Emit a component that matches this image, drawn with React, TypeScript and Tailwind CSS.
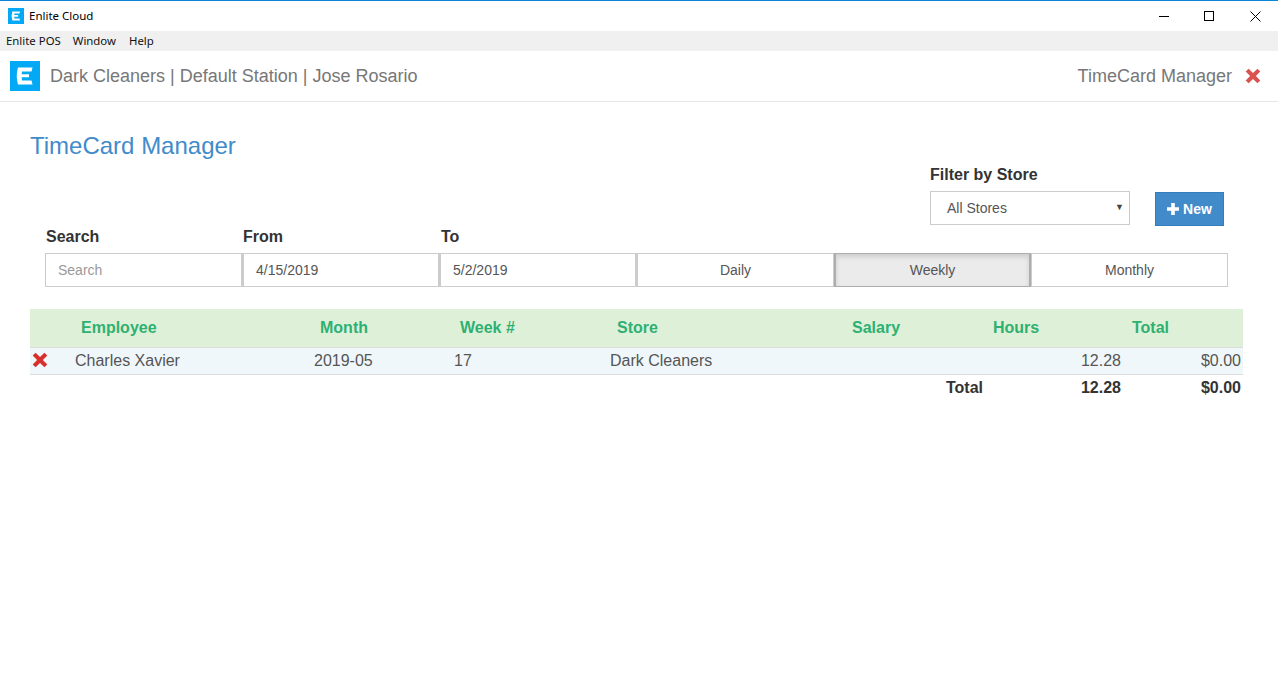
import React from "react";

const Logo = ({ size }: { size: number }) => (
  <svg width={size} height={size} viewBox="0 0 30 30" className="block shrink-0">
    <rect width="30" height="30" fill="#03a9f4" />
    <path d="M8 6.5 H22.5 L21.5 10.5 H12 L11.7 13.2 H19 V16.2 H11.7 L12 19.5 H21.5 L22.5 23.5 H8 Q5.5 15 8 6.5 Z" fill="#fff" />
  </svg>
);

const Cross = ({ size, className }: { size: number; className: string }) => (
  <svg width={size} height={size} viewBox="0 0 16 16" className={`block shrink-0 ${className}`} fill="currentColor">
    <path d="M3.6.7 8 5.1 12.4.7 15.3 3.6 10.9 8 15.3 12.4 12.4 15.3 8 10.9 3.6 15.3.7 12.4 5.1 8 .7 3.6Z" />
  </svg>
);

const arial = "font-['Liberation_Sans',Arial,sans-serif]";
const ui = "font-['Noto_Sans','Open_Sans',sans-serif]";

const headers: [string, string][] = [
  ["Employee", "pl-[51px] w-[290px]"],
  ["Month", "w-[140px]"],
  ["Week #", "w-[157px]"],
  ["Store", "w-[235px]"],
  ["Salary", "w-[141px]"],
  ["Hours", "w-[139px]"],
  ["Total", ""],
];

const rowGrid = "grid grid-cols-[37px_239px_140px_156px_381px_138px_120px_2px]";

export default function App() {
  return (
    <div className={`${arial} w-[1278px] h-[693px] bg-white overflow-hidden flex flex-col text-[#333]`}>
      <div className="h-[31px] border-t border-[#0a84d8] flex items-center shrink-0">
        <div className="pl-2 flex items-center gap-[5px]">
          <Logo size={16} />
          <span className={`${ui} text-[11.5px] text-black`}>Enlite Cloud</span>
        </div>
        <div className="ml-auto flex items-center">
          <div className="w-[45px] h-[30px] flex items-center justify-center">
            <div className="w-[10px] h-px bg-black" />
          </div>
          <div className="w-[46px] h-[30px] flex items-center justify-center">
            <div className="w-[10px] h-[10px] border border-black" />
          </div>
          <div className="w-[46px] h-[30px] flex items-center justify-center">
            <svg width="11" height="11" viewBox="0 0 11 11" fill="none" stroke="#000" strokeWidth="1">
              <path d="M.5.5l10 10M10.5.5l-10 10" />
            </svg>
          </div>
        </div>
      </div>

      <div className={`${ui} h-5 bg-[#f0f0f0] flex items-center text-[11.4px] text-[#111] pl-[6px] gap-[12px] shrink-0`}>
        <span>Enlite POS</span>
        <span className="mr-px">Window</span>
        <span>Help</span>
      </div>

      <div className="h-[51px] border-b border-[#e7e7e7] flex items-center pl-[10px] pr-[17px] shrink-0 text-[18px] text-[#777]">
        <Logo size={30} />
        <span className="ml-[10px]">Dark Cleaners | Default Station | Jose Rosario</span>
        <span className="ml-auto">TimeCard Manager</span>
        <Cross size={16} className="ml-[13px] text-[#d9534f]" />
      </div>

      <div className="pl-[30px] pr-[35px] flex-1">
        <h1 className="text-[24px] leading-[26px] text-[#428bca] mt-[31px]">TimeCard Manager</h1>

        <div className="flex justify-end items-end pr-[19px] mt-[6px] h-[60px]">
          <div className="w-[225px]">
            <div className="text-[16px] font-bold leading-[18px] mb-[7px]">Filter by Store</div>
            <div className="w-[200px] h-[34px] border border-[#ccc] flex items-center pl-4 pr-[5px] text-[14px] text-[#555]">
              <span>All Stores</span>
              <span className="ml-auto text-[9px] text-[#444]">▼</span>
            </div>
          </div>
          <div className="w-[69px] h-[34px] bg-[#428bca] border border-[#357ebd] text-white font-bold text-[14px] flex items-center justify-center gap-[4px] -mb-px">
            <svg width="12" height="12" viewBox="0 0 12 12" fill="currentColor" className="block shrink-0">
              <path d="M4.2 0H7.8V4.2H12V7.8H7.8V12H4.2V7.8H0V4.2H4.2Z" />
            </svg>
            <span>New</span>
          </div>
        </div>

        <div className="ml-[15px] mt-[3px] flex text-[16px] font-bold leading-[18px] h-[18px]">
          <span className="w-[198px] pl-px">Search</span>
          <span className="w-[198px]">From</span>
          <span>To</span>
        </div>

        <div className="ml-[15px] mt-[7px] flex h-[34px] text-[14px] text-[#555]">
          <div className="w-[198px] border-2 border-[#ccc] border-t border-b border-l flex items-center pl-3 text-[#999]">Search</div>
          <div className="w-[197px] border border-[#ccc] border-r-2 flex items-center pl-3">4/15/2019</div>
          <div className="w-[197px] border border-[#ccc] border-r-2 flex items-center pl-3">5/2/2019</div>
          <div className="w-[197px] border border-[#ccc] flex items-center justify-center">Daily</div>
          <div className="w-[197px] border border-[#adadad] border-x-2 flex items-center justify-center bg-[#ebebeb] shadow-[inset_0_3px_5px_rgba(0,0,0,0.125)]">Weekly</div>
          <div className="w-[197px] border border-[#ccc] flex items-center justify-center">Monthly</div>
        </div>

        <div className="mt-[22px] w-[1213px] text-[16px]">
          <div className="h-[39px] bg-[#dff0d8] border-b border-[#ddd] flex items-center font-bold text-[#2eb073]">
            {headers.map(([label, cls]) => (
              <div key={label} className={cls}>{label}</div>
            ))}
          </div>
          <div className={`${rowGrid} h-[27px] bg-[#f0f7fb] border-b border-[#ddd] items-center text-[#555]`}>
            <div className="pl-[2px] -mt-[2px]"><Cross size={16} className="text-[#d9302c]" /></div>
            <div className="pl-2">Charles Xavier</div>
            <div className="pl-2">2019-05</div>
            <div className="pl-2">17</div>
            <div className="pl-2">Dark Cleaners</div>
            <div className="text-right">12.28</div>
            <div className="text-right">$0.00</div>
            <div />
          </div>
          <div className={`${rowGrid} h-[26px] items-center font-bold`}>
            <div className="col-span-5 text-right">Total</div>
            <div className="text-right">12.28</div>
            <div className="text-right">$0.00</div>
            <div />
          </div>
        </div>
      </div>
    </div>
  );
}
